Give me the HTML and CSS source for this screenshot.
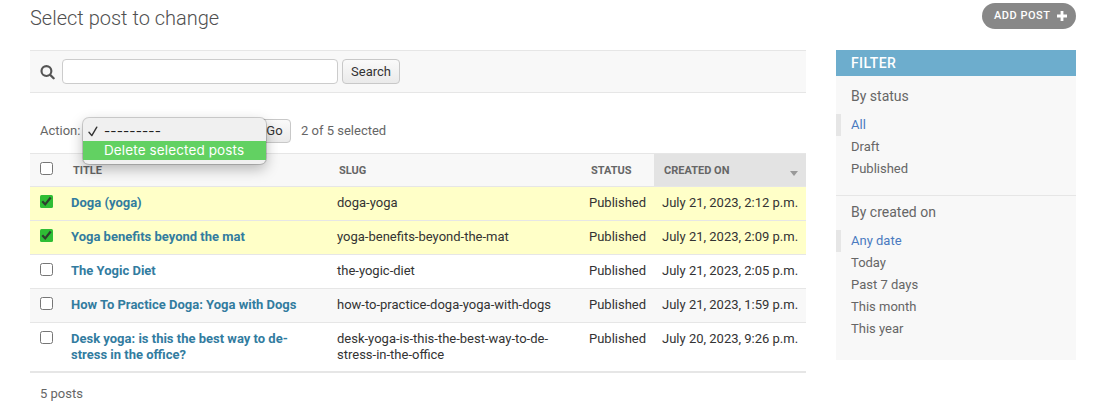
FILE: index.html
```
<!DOCTYPE html>
<html lang="en">
<head>
<meta charset="utf-8">
<title>Select post to change</title>
<link rel="stylesheet" href="styles.css">
</head>
<body>
<div class="page">
  <header class="topbar">
    <h1 class="page-title">Select post to change</h1>
    <a class="add-link"><span>Add post</span><svg class="plus" viewBox="0 0 10 10"><path d="M5 0V10M0 5H10" stroke="#fff" stroke-width="2.8"/></svg></a>
  </header>
  <div class="content">
    <main class="changelist">
      <form class="toolbar">
        <svg class="search-icon" viewBox="0 0 14 14"><circle cx="6" cy="5.7" r="4.6" fill="none" stroke="#555" stroke-width="2"/><path d="M9.4 9.1L12.7 12.4" stroke="#555" stroke-width="2.2" stroke-linecap="round"/></svg>
        <input class="search-input" type="text">
        <button class="button search-button" type="button">Search</button>
      </form>
      <div class="actions">
        <span class="action-label">Action:</span>
        <div class="select-anchor">
          <div class="menu">
            <div class="option"><svg class="tick" viewBox="0 0 10 11"><path d="M1 6.2L3.8 9.6L8.8 1.2" fill="none" stroke="#333" stroke-width="1.4" stroke-linecap="round" stroke-linejoin="round"/></svg><span class="dashes">---------</span></div>
            <div class="option active"><span>Delete selected posts</span></div>
          </div>
        </div>
        <button class="button go-button" type="button">Go</button>
        <span class="counter">2 of 5 selected</span>
      </div>
      <div class="results">
        <div class="row head">
          <div class="cell"><span class="box"></span></div>
          <div class="cell">Title</div>
          <div class="cell">Slug</div>
          <div class="cell">Status</div>
          <div class="cell sorted"><span>Created on</span><span class="caret"></span></div>
        </div>
        <div class="row selected">
          <div class="cell"><span class="box checked"><svg viewBox="0 0 13 13"><path d="M3 7L5.2 9.4L10 3.4" fill="none" stroke="#2d402d" stroke-width="2.2" stroke-linecap="square"/></svg></span></div>
          <div class="cell name">Doga (yoga)</div><div class="cell">doga-yoga</div><div class="cell">Published</div><div class="cell">July 21, 2023, 2:12 p.m.</div>
        </div>
        <div class="row selected">
          <div class="cell"><span class="box checked"><svg viewBox="0 0 13 13"><path d="M3 7L5.2 9.4L10 3.4" fill="none" stroke="#2d402d" stroke-width="2.2" stroke-linecap="square"/></svg></span></div>
          <div class="cell name">Yoga benefits beyond the mat</div><div class="cell">yoga-benefits-beyond-the-mat</div><div class="cell">Published</div><div class="cell">July 21, 2023, 2:09 p.m.</div>
        </div>
        <div class="row">
          <div class="cell"><span class="box"></span></div>
          <div class="cell name">The Yogic Diet</div><div class="cell">the-yogic-diet</div><div class="cell">Published</div><div class="cell">July 21, 2023, 2:05 p.m.</div>
        </div>
        <div class="row alt">
          <div class="cell"><span class="box"></span></div>
          <div class="cell name">How To Practice Doga: Yoga with Dogs</div><div class="cell">how-to-practice-doga-yoga-with-dogs</div><div class="cell">Published</div><div class="cell">July 21, 2023, 1:59 p.m.</div>
        </div>
        <div class="row">
          <div class="cell"><span class="box"></span></div>
          <div class="cell name">Desk yoga: is this the best way to de-<br>stress in the office?</div><div class="cell">desk-yoga-is-this-the-best-way-to-de-<br>stress-in-the-office</div><div class="cell">Published</div><div class="cell">July 20, 2023, 9:26 p.m.</div>
        </div>
      </div>
      <p class="paginator">5 posts</p>
    </main>
    <aside class="filter">
      <h2 class="filter-title">Filter</h2>
      <section class="group">
        <h3 class="group-title">By status</h3>
        <ul class="choices"><li class="current">All</li><li>Draft</li><li>Published</li></ul>
      </section>
      <section class="group">
        <h3 class="group-title">By created on</h3>
        <ul class="choices"><li class="current">Any date</li><li>Today</li><li>Past 7 days</li><li>This month</li><li>This year</li></ul>
      </section>
    </aside>
  </div>
</div>
</body>
</html>
```
FILE: styles.css
```
* { box-sizing: border-box; }
body { margin: 0; background: #fff; color: #333; font: 13px/16px Roboto, "Liberation Sans", sans-serif; overflow: hidden; }
h1, h2, h3, p, ul { margin: 0; padding: 0; }
.page { height: 407px; padding: 3px 35px 0 30px; }
.topbar { display: flex; justify-content: space-between; align-items: flex-start; height: 47px; }
.page-title { padding-top: 3px; font-size: 20px; line-height: 24px; font-weight: 300; color: #505050; }
.add-link { display: flex; align-items: center; gap: 7px; width: 94px; height: 26px; padding: 0 0 1px 12px; border-radius: 13px; background: #888; color: #fff; font-size: 11px; font-weight: 500; letter-spacing: .5px; text-transform: uppercase; white-space: nowrap; }
.plus { width: 10px; height: 10px; margin-top: 1px; }
.content { display: flex; gap: 30px; align-items: flex-start; }
.changelist { width: 776px; }
.toolbar { display: flex; height: 43px; padding: 8px 10px; background: #f8f8f8; border: solid #e6e6e6; border-width: 1px 0; }
.search-icon { width: 15px; height: 15px; margin: 6px 7px 0 0; }
.search-input { width: 276px; height: 25px; margin: 0 4px 0 0; padding: 0 5px; border: 1px solid #ccc; border-radius: 4px; background: #fff; outline: 0; }
.button { padding: 0; border: 1px solid #c8c8c8; border-radius: 4px; background: linear-gradient(#fafafa, #eaeaea); color: #333; font: 13px/16px Roboto, "Liberation Sans", sans-serif; }
.search-button { width: 58px; height: 25px; }
.actions { display: flex; align-items: center; height: 60px; padding: 16px 10px 0; color: #666; }
.action-label { width: 42px; }
.select-anchor { position: relative; width: 174px; height: 24px; }
.menu { position: absolute; z-index: 2; left: 1px; top: -1px; width: 183px; height: 46px; padding-top: 3px; border-radius: 6px; background: #f0f0f0; box-shadow: 0 0 0 1px rgba(0,0,0,.17), 0 5px 14px rgba(0,0,0,.28); color: #222; font-family: Inter, "Liberation Sans", sans-serif; font-size: 13.5px; }
.option { display: flex; align-items: center; height: 20px; padding-left: 21px; white-space: nowrap; letter-spacing: .12px; }
.option.active { height: 19px; padding-bottom: 2px; background: #62d162; color: #fff; }
.tick { width: 10px; height: 11px; margin: 0 6px 0 -16px; }
.go-button { width: 35px; height: 24px; padding-left: 2px; }
.counter { margin-left: 10px; }
.results { border-top: 1px solid #e6e6e6; border-bottom: 1px solid #e6e6e6; }
.row { display: grid; grid-template-columns: 33px 266px 252px 73px 152px; min-height: 34px; border-bottom: 1px solid #e6e6e6; }
.row:last-child { min-height: 49px; }
.cell { padding: 8px 0 8px 8px; white-space: nowrap; }
.cell:first-child { padding: 8px 0 0 10px; }
.row.head { height: 33px; min-height: 0; background: #f8f8f8; color: #666; font-size: 11px; font-weight: 700; text-transform: uppercase; }
.head .cell + .cell { padding: 9px 0 7px 10px; }
.head .cell.sorted { display: flex; justify-content: space-between; padding-right: 8px; background: #e3e3e3; }
.caret { width: 0; height: 0; margin-top: 8px; border: 4.5px solid transparent; border-top: 5px solid #999; border-bottom: 0; }
.selected { background: #ffffc8; }
.alt { background: #f8f8f8; }
.name { color: #327c9f; font-weight: 700; }
.box { display: block; width: 13px; height: 13px; border: 1px solid #767676; border-radius: 2.5px; background: #fff; }
.box.checked { border: 0; border-radius: 1.5px; background: #2fbd35; }
.box svg { display: block; width: 13px; height: 13px; }
.paginator { padding: 13px 10px 0; color: #666; }
.filter { width: 240px; height: 310px; background: #f8f8f8; color: #666; }
.filter-title { height: 26px; padding: 0 15px; background: #6dadcd; color: #fff; font-size: 14px; line-height: 26px; font-weight: 500; letter-spacing: .4px; text-transform: uppercase; }
.group { height: 120px; border-bottom: 1px solid #e6e6e6; }
.group + .group { height: auto; padding-top: 0; border: 0; }
.group-title { height: 38px; padding: 12px 15px 0; font-size: 14px; line-height: 16px; font-weight: 400; }
.group + .group .group-title { height: 34px; padding-top: 8px; }
.choices { list-style: none; line-height: 22px; }
.choices li { padding-left: 15px; }
.choices .current { padding-left: 10px; border-left: 5px solid #e6e6e6; color: #4a7ac0; }
```
